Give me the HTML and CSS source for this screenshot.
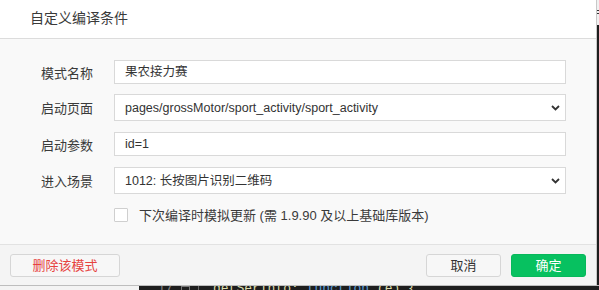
FILE: index.html
```html
<!DOCTYPE html>
<html lang="zh">
<head>
<meta charset="utf-8">
<title>自定义编译条件</title>
<link rel="stylesheet" href="styles.css">
</head>
<body>
<div class="screen">
  <div class="top">
    <div class="dialog">
      <div class="dlg-header">自定义编译条件</div>
      <div class="dlg-body">
        <div class="row">
          <div class="label">模式名称</div>
          <div class="field">果农接力赛</div>
        </div>
        <div class="row">
          <div class="label">启动页面</div>
          <div class="field select">
            <span>pages/grossMotor/sport_activity/sport_activity</span>
            <svg class="chev" width="9" height="6" viewBox="0 0 9 6"><path d="M1 1 L4.5 4.5 L8 1" fill="none" stroke="#333" stroke-width="1.8"/></svg>
          </div>
        </div>
        <div class="row">
          <div class="label">启动参数</div>
          <div class="field">id=1</div>
        </div>
        <div class="row">
          <div class="label">进入场景</div>
          <div class="field select">
            <span>1012: 长按图片识别二维码</span>
            <svg class="chev" width="9" height="6" viewBox="0 0 9 6"><path d="M1 1 L4.5 4.5 L8 1" fill="none" stroke="#333" stroke-width="1.8"/></svg>
          </div>
        </div>
        <div class="check-row">
          <span class="checkbox"></span>
          <span class="check-text">下次编译时模拟更新 (需 1.9.90 及以上基础库版本)</span>
        </div>
      </div>
      <div class="dlg-footer">
        <div class="btn btn-danger">删除该模式</div>
        <div class="footer-right">
          <div class="btn">取消</div>
          <div class="btn btn-primary">确定</div>
        </div>
      </div>
    </div>
    <div class="side">
      <div class="side-top"><span class="mark"></span><span class="mark"></span></div>
    </div>
  </div>
  <div class="bottom">
    <div class="bottom-left"></div>
    <div class="code">
      <span class="ln">17</span><span class="gutter"><span class="fold"></span></span><span class="code-text">getSerInfo: <span class="kw">function</span> (e) {</span>
    </div>
  </div>
</div>
</body>
</html>
```
FILE: styles.css
```css
* { box-sizing: border-box; }
html, body { margin: 0; padding: 0; }
body {
  width: 599px;
  height: 290px;
  overflow: hidden;
  background: #1e1e1e;
  font-family: "Liberation Sans", "Noto Sans CJK SC", sans-serif;
  color: #333;
}
.screen { display: flex; flex-direction: column; }
.top { display: flex; height: 285px; }
.dialog {
  width: 597px;
  height: 285px;
  border-right: 1px solid #c8c8c8;
  display: flex;
  flex-direction: column;
  background: #f9f9f9;
}
.dlg-header {
  height: 39px;
  background: #fff;
  border-bottom: 1px solid #dcdcdc;
  padding-left: 30px;
  font-size: 14px;
  line-height: 37px;
  color: #3a3a3a;
}
.dlg-body {
  padding: 21px 0 0 0;
  height: 206px;
  border-bottom: 1px solid #e2e2e2;
  display: flex;
  flex-direction: column;
  gap: 10px;
}
.row { display: flex; align-items: center; }
.label {
  width: 114px;
  padding-left: 41px;
  font-size: 13px;
  color: #3a3a3a;
}
.field {
  width: 452px;
  height: 24px;
  border: 1px solid #d9d9d9;
  background: #fff;
  padding: 0 10px;
  font-size: 12.5px;
  line-height: 22px;
  color: #333;
  display: flex;
  align-items: center;
}
.select { height: 27px; justify-content: space-between; padding-right: 5px; }
.row:nth-child(3), .row:nth-child(4) { margin-top: 1px; }
.chev { display: block; }
.check-row {
  display: flex;
  align-items: center;
  padding-left: 114px;
  margin-top: 1px;
}
.checkbox {
  width: 14px;
  height: 14px;
  border: 1px solid #cfcfcf;
  background: #fff;
  border-radius: 1px;
}
.check-text { margin-left: 11px; font-size: 13px; color: #3a3a3a; }
.dlg-footer {
  flex: 1;
  background: #f4f4f4;
  display: flex;
  justify-content: space-between;
  align-items: flex-start;
  padding: 9px 10px 0 10px;
}
.footer-right { display: flex; gap: 10px; }
.btn {
  width: 75px;
  height: 23px;
  border: 1px solid #d6d6d6;
  border-radius: 3px;
  background: #f7f7f7;
  font-size: 13px;
  line-height: 21px;
  text-align: center;
  color: #333;
}
.btn-danger { width: 110px; color: #e64340; }
.btn-primary { background: #07c160; border-color: #07b85b; color: #fff; }
.side { width: 2px; display: flex; flex-direction: column; }
.side-top {
  height: 25px;
  background: #f0f0f0;
  display: flex;
  flex-direction: column;
  gap: 2px;
  padding-top: 10px;
}
.mark { height: 1px; background: #333; }
.bottom { height: 5px; display: flex; overflow: hidden; border-top: 1px solid #bdbdbd; }
.bottom-left { width: 139px; background: #f3f3f3; }
.code {
  flex: 1;
  background: #1e1e1e;
  font-family: "Liberation Mono", monospace;
  font-size: 13px;
  line-height: 14px;
  color: #d4d4d4;
  display: flex;
  white-space: nowrap;
  margin-top: -4px;
}
.ln { width: 34px; text-align: right; color: #858585; }
.gutter { width: 26px; border-right: 1px solid #666; margin-right: 14px; display: flex; justify-content: center; padding-top: 4px; }
.fold { width: 9px; height: 6px; border: 1px solid #777; border-bottom: none; }
.code-text { color: #dcdcaa; }
.kw { color: #569cd6; }
```
